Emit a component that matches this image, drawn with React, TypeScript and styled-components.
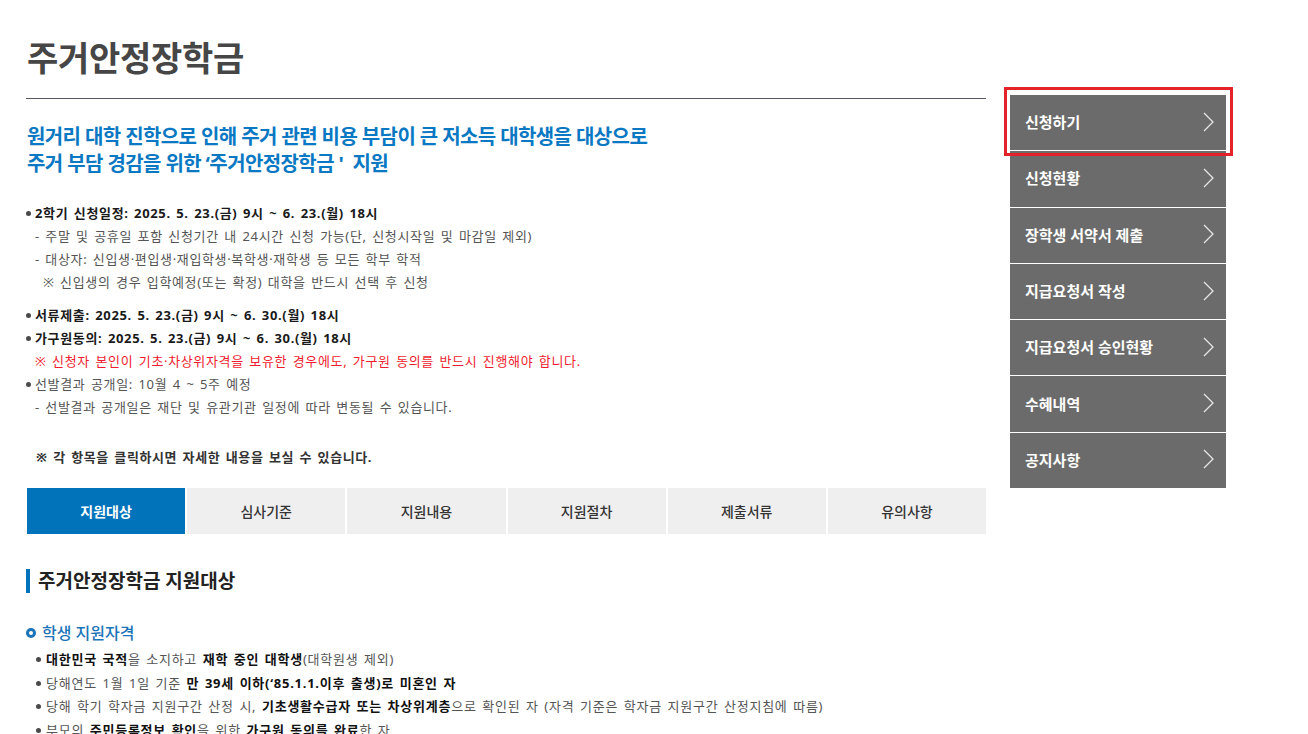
import React from "react";
import styled, { createGlobalStyle } from "styled-components";

const GlobalStyle = createGlobalStyle`
  html, body { margin: 0; padding: 0; background: #fff; }
  body {
    font-family: "Noto Sans", "Noto Sans CJK KR", sans-serif;
    color: #555;
    -webkit-font-smoothing: antialiased;
  }
  * { box-sizing: border-box; }
`;

const Page = styled.div`
  display: flex;
  align-items: flex-start;
  padding-left: 26px;
  width: 1308px;
  height: 734px;
  overflow: hidden;
`;

const Main = styled.main`
  width: 960px;
  flex: none;
`;

const Title = styled.h1`
  margin: 37px 0 0;
  padding: 0 0 19px 1px;
  font-size: 34px;
  line-height: 42px;
  font-weight: 700;
  color: #464646;
  letter-spacing: -0.3px;
  border-bottom: 1px solid #585864;
`;

const Lead = styled.p`
  margin: 24px 0 0 1px;
  font-size: 20px;
  line-height: 27px;
  font-weight: 700;
  color: #0a78c2;
  letter-spacing: -0.6px;
`;

const Notes = styled.div`
  margin-top: 25px;
`;

const NoteGroup = styled.ul<{ $gap?: number }>`
  list-style: none;
  margin: ${(p) => p.$gap ?? 0}px 0 0;
  padding: 0;
`;

const Line = styled.li<{ $indent?: number; $tone?: "strong" | "red" | "plain" }>`
  position: relative;
  padding-left: ${(p) => p.$indent ?? 9}px;
  font-size: 13px;
  line-height: 23px;
  letter-spacing: 0.65px;
  word-spacing: 1.5px;
  white-space: nowrap;
  font-weight: ${(p) => (p.$tone === "strong" ? 700 : 400)};
  color: ${(p) =>
    p.$tone === "strong" ? "#1a1a1a" : p.$tone === "red" ? "#ee1c2e" : "#555"};
`;

const Dot = styled.span`
  position: absolute;
  left: 0;
  top: 9px;
  width: 5px;
  height: 5px;
  border-radius: 50%;
  background: #4a4a4a;
`;

const Hint = styled.p`
  margin: 27px 0 0 10px;
  font-size: 13px;
  line-height: 23px;
  font-weight: 700;
  color: #333;
  letter-spacing: 0.6px;
  word-spacing: 1.5px;
`;

const Tabs = styled.nav`
  margin-top: 19px;
  display: grid;
  grid-template-columns: repeat(6, 1fr);
  column-gap: 2px;
  width: 959px;
  margin-left: 1px;
`;

const Tab = styled.div<{ $active?: boolean }>`
  height: 46px;
  display: flex;
  align-items: center;
  justify-content: center;
  font-size: 14px;
  font-weight: ${(p) => (p.$active ? 700 : 500)};
  color: ${(p) => (p.$active ? "#fff" : "#333")};
  background: ${(p) => (p.$active ? "#0073ba" : "#efefef")};
`;

const SectionTitle = styled.h2`
  margin: 35px 0 0;
  padding-left: 8px;
  border-left: 4px solid #0073ba;
  font-size: 19px;
  line-height: 24px;
  font-weight: 700;
  color: #222;
  letter-spacing: 0;
`;

const SubTitle = styled.h3`
  margin: 28px 0 0;
  display: flex;
  align-items: center;
  gap: 6px;
  font-size: 16px;
  line-height: 24px;
  font-weight: 500;
  color: #1b74b8;
  letter-spacing: 0;
`;

const Ring = styled.span`
  width: 10px;
  height: 10px;
  border: 3px solid #1b74b8;
  border-radius: 50%;
  flex: none;
`;

const Criteria = styled.ul`
  list-style: none;
  margin: 3px 0 0 10px;
  padding: 0;
`;

const Criterion = styled.li`
  position: relative;
  padding-left: 10px;
  font-size: 13px;
  line-height: 23.5px;
  color: #555;
  letter-spacing: 0.75px;
  word-spacing: 1.5px;
  white-space: nowrap;
`;

const B = styled.b`
  font-weight: 700;
  color: #111;
`;

const Side = styled.aside`
  position: relative;
  margin: 95px 0 0 24px;
  width: 216px;
  flex: none;
`;

const SideItem = styled.a`
  height: 56.3px;
  display: flex;
  align-items: center;
  justify-content: space-between;
  padding: 0 12px 2px 15px;
  background: #6b6b6b;
  border-bottom: 1px solid #fff;
  color: #fff;
  font-size: 15px;
  font-weight: 700;
  letter-spacing: 0;
  text-decoration: none;
  &:last-child { border-bottom: none; }
`;

const Focus = styled.span`
  position: absolute;
  left: -6px;
  top: -8px;
  width: 229px;
  height: 69px;
  border: 3px solid #e3232a;
  pointer-events: none;
`;

const Chevron = () => (
  <svg width="11" height="20" viewBox="0 0 11 20" fill="none">
    <polyline points="1,1 10,10 1,19" stroke="#e6e6e6" strokeWidth="1.3" />
  </svg>
);

const sideMenu = [
  "신청하기",
  "신청현황",
  "장학생 서약서 제출",
  "지급요청서 작성",
  "지급요청서 승인현황",
  "수혜내역",
  "공지사항",
];

const tabs = ["지원대상", "심사기준", "지원내용", "지원절차", "제출서류", "유의사항"];

export default function App() {
  return (
    <>
      <GlobalStyle />
      <Page>
        <Main>
          <Title>주거안정장학금</Title>
          <Lead>
            원거리 대학 진학으로 인해 주거 관련 비용 부담이 큰 저소득 대학생을 대상으로
            <br />
            주거 부담 경감을 위한 ‘주거안정장학금 '&nbsp;&nbsp;지원
          </Lead>
          <Notes>
            <NoteGroup>
              <Line $tone="strong">
                <Dot />
                2학기 신청일정: 2025. 5. 23.(금) 9시 ~ 6. 23.(월) 18시
              </Line>
              <Line>- 주말 및 공휴일 포함 신청기간 내 24시간 신청 가능(단, 신청시작일 및 마감일 제외)</Line>
              <Line>- 대상자: 신입생·편입생·재입학생·복학생·재학생 등 모든 학부 학적</Line>
              <Line $indent={17}>※ 신입생의 경우 입학예정(또는 확정) 대학을 반드시 선택 후 신청</Line>
            </NoteGroup>
            <NoteGroup $gap={10}>
              <Line $tone="strong">
                <Dot />
                서류제출: 2025. 5. 23.(금) 9시 ~ 6. 30.(월) 18시
              </Line>
              <Line $tone="strong">
                <Dot />
                가구원동의: 2025. 5. 23.(금) 9시 ~ 6. 30.(월) 18시
              </Line>
              <Line $tone="red">※ 신청자 본인이 기초·차상위자격을 보유한 경우에도, 가구원 동의를 반드시 진행해야 합니다.</Line>
              <Line>
                <Dot />
                선발결과 공개일: 10월 4 ~ 5주 예정
              </Line>
              <Line>- 선발결과 공개일은 재단 및 유관기관 일정에 따라 변동될 수 있습니다.</Line>
            </NoteGroup>
          </Notes>
          <Hint>※ 각 항목을 클릭하시면 자세한 내용을 보실 수 있습니다.</Hint>
          <Tabs>
            {tabs.map((t, i) => (
              <Tab key={t} $active={i === 0}>
                {t}
              </Tab>
            ))}
          </Tabs>
          <SectionTitle>주거안정장학금 지원대상</SectionTitle>
          <SubTitle>
            <Ring />
            학생 지원자격
          </SubTitle>
          <Criteria>
            <Criterion>
              <Dot />
              <B>대한민국 국적</B>을 소지하고 <B>재학 중인 대학생</B>(대학원생 제외)
            </Criterion>
            <Criterion>
              <Dot />
              당해연도 1월 1일 기준 <B>만 39세 이하(‘85.1.1.이후 출생)로 미혼인 자</B>
            </Criterion>
            <Criterion>
              <Dot />
              당해 학기 학자금 지원구간 산정 시, <B>기초생활수급자 또는 차상위계층</B>으로 확인된 자 (자격 기준은 학자금 지원구간 산정지침에 따름)
            </Criterion>
            <Criterion>
              <Dot />
              부모의 <B>주민등록정보 확인</B>을 위한 <B>가구원 동의를 완료</B>한 자
            </Criterion>
          </Criteria>
        </Main>
        <Side>
          {sideMenu.map((m) => (
            <SideItem key={m} href="#">
              <span>{m}</span>
              <Chevron />
            </SideItem>
          ))}
          <Focus />
        </Side>
      </Page>
    </>
  );
}
